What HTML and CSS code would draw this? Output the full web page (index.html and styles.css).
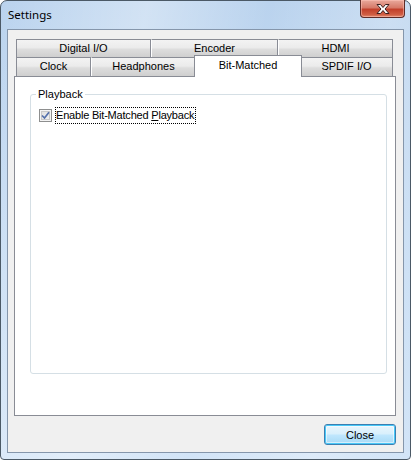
FILE: index.html
```html
<!DOCTYPE html>
<html>
<head>
<meta charset="utf-8">
<link rel="stylesheet" href="styles.css">
</head>
<body>
<div class="window">
  <div class="titlebar">
    <span class="title">Settings</span>
    <div class="xbtn">
      <svg width="16" height="12" viewBox="0 0 16 12"><path d="M2 1.5 H5.5 L8 4.5 L10.5 1.5 H14 L10 6 L14 10.5 H10.5 L8 7.5 L5.5 10.5 H2 L6 6 Z" fill="#fff" stroke="#3a1f1f" stroke-width="1" stroke-linejoin="round"/></svg>
    </div>
  </div>
  <div class="client">
    <div class="tabctl">
      <div class="tabrow back">
        <div class="tab w1">Digital I/O</div>
        <div class="tab w2">Encoder</div>
        <div class="tab w3">HDMI</div>
      </div>
      <div class="tabrow front">
        <div class="tab w4">Clock</div>
        <div class="tab w5">Headphones</div>
        <div class="tab w6 sel">Bit-Matched</div>
        <div class="tab w7">SPDIF I/O</div>
      </div>
      <div class="panel">
        <fieldset class="group">
          <legend>Playback</legend>
          <div class="checkrow">
            <span class="cb">
              <svg width="9" height="9" viewBox="0 0 9 9"><path d="M1 4.5 L3.5 7 L8 1.2" fill="none" stroke="#5470ab" stroke-width="1.7"/></svg>
            </span>
            <span class="cblabel">Enable Bit-Matched <u>P</u>layback</span>
          </div>
        </fieldset>
      </div>
    </div>
    <div class="buttons">
      <button class="btn">Close</button>
    </div>
  </div>
</div>
</body>
</html>
```
FILE: styles.css
```css
html, body { margin: 0; padding: 0; }
body { width: 411px; height: 460px; overflow: hidden; background: #ffffff; }
.window {
  box-sizing: border-box;
  width: 411px;
  height: 460px;
  border: 1px solid #4b5966;
  border-radius: 7px 7px 4px 4px;
  background:
    linear-gradient(100deg, rgba(255,255,255,0) 0%, rgba(255,255,255,0.35) 30%, rgba(255,255,255,0) 55%, rgba(255,255,255,0.25) 80%, rgba(255,255,255,0) 100%),
    linear-gradient(to bottom, #bad3ee, #c9def4 60%, #d2e4f7);
  padding: 0 6px 6px 6px;
  display: flex;
  flex-direction: column;
  font-family: "Liberation Sans", Arial, sans-serif;
  font-size: 11px;
  color: #000;
}
.titlebar {
  height: 28px;
  display: flex;
  justify-content: space-between;
  align-items: flex-start;
}
.title {
  font-family: "Noto Sans", "Open Sans", sans-serif;
  font-size: 11.5px;
  margin-top: 6px;
  margin-left: 1px;
  color: #000;
}
.xbtn {
  width: 45px;
  height: 18px;
  margin-top: -1px;
  margin-right: -1px;
  box-sizing: border-box;
  border: 1px solid #5e2c28;
  border-top: none;
  border-radius: 0 0 4px 4px;
  background: linear-gradient(to bottom, #e9a99c 0%, #d67a69 45%, #c2402b 55%, #cf5d43 85%, #e38a6f 100%);
  box-shadow: inset 0 0 0 1px rgba(255,200,190,0.5);
  display: flex;
  align-items: center;
  justify-content: center;
}
.client {
  flex: 1;
  border: 1px solid #8596ab;
  background: #f0f0f0;
  display: flex;
  flex-direction: column;
}
.tabctl {
  padding: 9px 7px 0 6px;
  display: flex;
  flex-direction: column;
}
.tabrow {
  display: flex;
  margin: 0 2px;
}
.tabrow.back { height: 18px; }
.tabrow.front { height: 19px; align-items: flex-end; }
.tab {
  box-sizing: border-box;
  height: 100%;
  border: 1px solid #898c95;
  border-bottom: none;
  background: linear-gradient(to bottom, #f3f3f3 0%, #ebebeb 45%, #dddddd 55%, #cfcfcf 100%);
  text-align: center;
  line-height: 17px;
  white-space: nowrap;
}
.tab + .tab { border-left: 1px solid #ffffff; box-shadow: -1px 0 0 #898c95; }
.w1 { width: 135px; }
.w2 { width: 127px; }
.w3 { width: 115px; }
.w4 { width: 75px; }
.w5 { width: 105px; }
.w6 { width: 104px; }
.w7 { width: 93px; }
.tab.sel {
  position: relative;
  z-index: 2;
  height: 22px;
  margin: 0 -2px -1px -2px;
  background: #ffffff;
  border-left: 1px solid #898c95;
  box-shadow: none;
  line-height: 19px;
  width: 108px;
}
.tab.sel + .tab { border-left: 1px solid #898c95; box-shadow: none; }
.panel {
  box-sizing: border-box;
  height: 340px;
  border: 1px solid #898c95;
  background: #ffffff;
  padding: 10px 8px 0 15px;
}
.group {
  margin: 0;
  height: 287px;
  box-sizing: border-box;
  border: 1px solid #d5dfe5;
  border-radius: 3px;
  padding: 5px 7px 0 8px;
}
.group legend {
  padding: 0 2px;
  margin-left: -3px;
  line-height: 14px;
}
.checkrow {
  display: flex;
  align-items: center;
  gap: 3px;
  margin-top: 1px;
}
.cb {
  box-sizing: border-box;
  width: 13px;
  height: 13px;
  border: 1px solid #8e8f8f;
  background: linear-gradient(135deg, #dcdcdc, #f5f5f5);
  box-shadow: inset 0 0 0 1px #f4f4f4, inset 0 0 0 2px #c9c9c9;
  display: flex;
  align-items: center;
  justify-content: center;
}
.cblabel {
  border: 1px dotted #000;
  padding: 0 1px 1px 0;
  line-height: 14px;
  letter-spacing: -0.2px;
}
.buttons {
  display: flex;
  justify-content: flex-end;
  padding: 8px 7px 0 0;
}
.btn {
  box-sizing: border-box;
  width: 72px;
  height: 21px;
  font-family: "Liberation Sans", Arial, sans-serif;
  font-size: 11px;
  color: #000;
  border: 1px solid #3c7fb1;
  border-radius: 3px;
  background: linear-gradient(to bottom, #eaf6fd 0%, #d9f0fc 45%, #bee6fd 55%, #a7d9f5 100%);
  box-shadow: inset 0 0 0 1px #48c8f8, inset 0 0 0 2px rgba(255,255,255,0.5);
  padding: 0;
}
```
